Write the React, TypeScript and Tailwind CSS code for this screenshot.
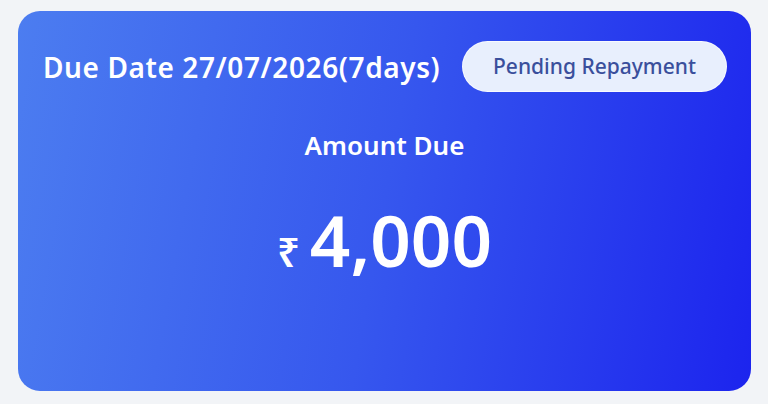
// Repayment summary card: due date, status pill and the outstanding amount
const dueDate = '27/07/2026';
const daysLeft = 7;
const amount = 4000;

function StatusPill({ label }: { label: string }) {
  return (
    <span className="flex h-[51px] w-[265px] items-center justify-center rounded-full border border-white/70 bg-[#e8effd] text-[21px] font-medium text-[#3a4f9c]">
      {label}
    </span>
  );
}

export default function App() {
  const amountText = amount.toLocaleString('en-IN');

  return (
    <div
      className="h-[404px] w-[768px] bg-[#f2f4f7] pl-[18px] pr-[17px] pt-[11px]"
      style={{ fontFamily: '"Noto Sans", "Open Sans", sans-serif' }}
    >
      <div className="flex h-[380px] flex-col rounded-[22px] bg-[linear-gradient(100deg,#4c7df0_0%,#3657ee_50%,#1c24ee_100%)] px-[24px] pt-[30px] text-white">
        <div className="flex items-center justify-between pl-px">
          <h2 className="text-[28px] font-semibold tracking-[0.6px]">
            Due Date {dueDate}({daysLeft}days)
          </h2>
          <StatusPill label="Pending Repayment" />
        </div>

        <p className="mt-[36px] text-center text-[26px] font-semibold leading-[34px]">
          Amount Due
        </p>

        <div className="mt-[42px] flex items-baseline justify-center">
          <span className="mr-[10px] text-[40px] font-semibold leading-none">₹</span>
          <span className="text-[71px] font-semibold leading-none">{amountText}</span>
        </div>
      </div>
    </div>
  );
}
